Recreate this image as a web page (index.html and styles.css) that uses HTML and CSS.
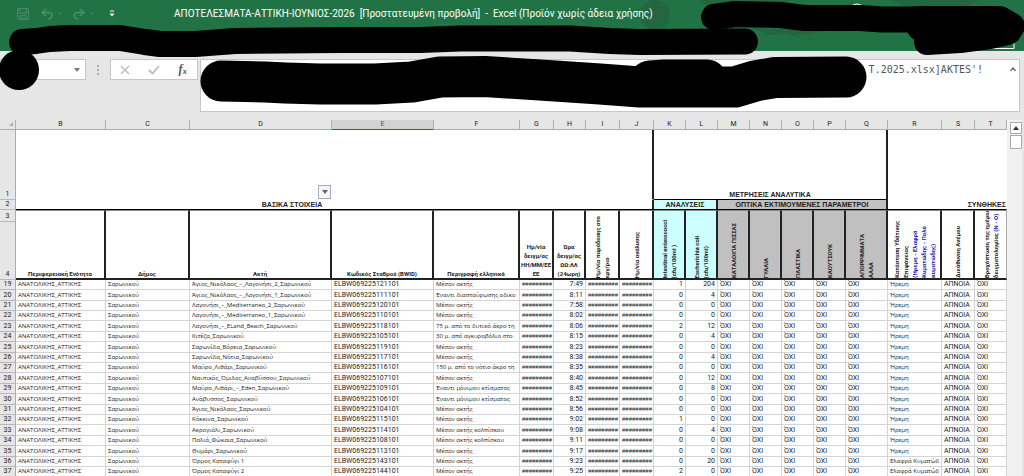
FILE: index.html
```html
<!DOCTYPE html>
<html lang="el">
<head>
  <meta charset="utf-8">
  <title>ΑΠΟΤΕΛΕΣΜΑΤΑ-ΑΤΤΙΚΗ-ΙΟΥΝΙΟΣ-2026</title>
  <link rel="stylesheet" href="styles.css">
</head>
<body>
<header class="titlebar">
<svg class="pattern" width="384" height="51" viewBox="0 0 384 51">
<circle cx="15" cy="15" r="15"/>
<path d="M60 0h90l-20 8H70zM110 28l50 2-1 8-12-4-16 1zM160 28h45l-25 4-20 3zM250 0h90l-20 8h-50z"/>
</svg>
<div class="quick">
<button class="quick-button" aria-label="Αποθήκευση"><svg width="12" height="12" viewBox="0 0 12 12"><path d="M.7.7h10.6v10.6H2.2L.7 9.8zM2.7.7v4.6h6.6V.7M3.2 11.3V7.7h5.6v3.6M5 9v2"/></svg></button>
<button class="quick-button undo" aria-label="Αναίρεση"><svg width="22" height="12" viewBox="0 0 22 12"><path d="M5 1 1 4.5 5 8M1.5 4.5H8c4.5 0 4 6-1 6.5" stroke-width="1.5"/><path d="m17 4.5 2 2 2-2"/></svg></button>
<button class="quick-button redo" aria-label="Επανάληψη"><svg width="22" height="12" viewBox="0 0 22 12"><path d="m7 1 4 3.5L7 8M10.5 4.5H4.5C-.5 4.5 0 10.5 5 11" stroke-width="1.5"/><path d="m17 4.5 2 2 2-2"/></svg></button>
<button class="quick-button more" aria-label="Προσαρμογή"><svg width="6" height="8" viewBox="0 0 6 8"><path d="M1 1h4"/><path class="solid" d="M.5 3.5h5L3 6.5z"/></svg></button>
</div>
<h1 class="title">ΑΠΟΤΕΛΕΣΜΑΤΑ-ΑΤΤΙΚΗ-ΙΟΥΝΙΟΣ-2026&nbsp; [Προστατευμένη προβολή]&nbsp; -&nbsp; Excel (Προϊόν χωρίς άδεια χρήσης)</h1>
</header>

<div class="formula-bar">
<div class="name-box"><input class="name-input" type="text" aria-label="Πλαίσιο ονόματος"><svg width="6" height="4" viewBox="0 0 6 4"><path d="M0 0h6L3 4z" fill="#777"/></svg></div>
<svg class="dots" width="2" height="10" viewBox="0 0 2 10"><path d="M0 0h2v2H0zM0 4h2v2H0zM0 8h2v2H0z" fill="#aaa"/></svg>
<div class="formula-buttons">
<button class="formula-button" aria-label="Άκυρο"><svg width="10" height="10" viewBox="0 0 10 10"><path d="m1 1 8 8M9 1 1 9" stroke="#bbb" stroke-width="1.4"/></svg></button>
<button class="formula-button" aria-label="Εισαγωγή"><svg width="12" height="10" viewBox="0 0 12 10"><path d="m1 5 3.5 3.5L11 1" fill="none" stroke="#bbb" stroke-width="1.8"/></svg></button>
<button class="formula-button fx" aria-label="Εισαγωγή συνάρτησης">f<small>x</small></button>
</div>
<div class="formula">
<output class="formula-text">T.2025.xlsx]AKTES'!</output>
<button class="collapse" aria-label="Σύμπτυξη"><svg width="6" height="5" viewBox="0 0 6 5"><path d="m.5 4 2.5-3 2.5 3" fill="none" stroke="#666" stroke-width="1.4"/></svg></button>
</div>
</div>

<main class="workspace">
<table class="sheet">
<colgroup>
<col class="c-num"><col class="c-b"><col class="c-c"><col class="c-d"><col class="c-e"><col class="c-f"><col class="c-g"><col class="c-h"><col class="c-i"><col class="c-i"><col class="c-k"><col class="c-k"><col class="c-k"><col class="c-k"><col class="c-k"><col class="c-k"><col class="c-q"><col class="c-r"><col class="c-s"><col>
</colgroup>
<thead>
<tr class="letters">
<th class="corner"><svg width="4" height="4" viewBox="0 0 4 4"><path d="M4 0v4H0z" fill="#aaa"/></svg></th><th>B</th><th>C</th><th>D</th><th class="active">E</th><th>F</th><th>G</th><th>H</th><th>I</th><th>J</th><th>K</th><th>L</th><th>M</th><th>N</th><th>O</th><th>P</th><th>Q</th><th>R</th><th>S</th><th>T</th>
</tr>
<tr class="row-1">
<th class="num">1</th>
<td class="filter-cell" colspan="3"><button class="filter" aria-label="Φίλτρο"><svg width="6" height="4" viewBox="0 0 6 4"><path d="M0 0h6L3 4z" fill="#666"/></svg></button></td>
<td class="thick-right" colspan="6"></td>
<td class="thick-right thick-bottom group" colspan="7">ΜΕΤΡΗΣΕΙΣ ΑΝΑΛΥΤΙΚΑ</td>
<td colspan="3"></td>
</tr>
<tr class="row-2">
<th class="num">2</th>
<td class="group basic thick-right" colspan="9">ΒΑΣΙΚΑ ΣΤΟΙΧΕΙΑ</td>
<td class="group cyan thick-right" colspan="2">ΑΝΑΛΥΣΕΙΣ</td>
<td class="group grey thick-right" colspan="5">ΟΠΤΙΚΑ ΕΚΤΙΜΟΥΜΕΝΕΣ ΠΑΡΑΜΕΤΡΟΙ</td>
<td class="group conditions" colspan="3">ΣΥΝΘΗΚΕΣ</td>
</tr>
<tr class="row-3">
<th class="num">3</th>
<th class="field" rowspan="2">Περιφερειακή Ενότητα</th>
<th class="field" rowspan="2">Δήμος</th>
<th class="field" rowspan="2">Ακτή</th>
<th class="field" rowspan="2">Κωδικός Σταθμού (BWID)</th>
<th class="field" rowspan="2">Περιγραφή ελληνικά</th>
<th class="field" rowspan="2">Ημ/νία<br>δειγμ/ας<br>ΗΗ/ΜΜ/ΕΕ<br>ΕΕ</th>
<th class="field" rowspan="2">Ώρα<br>δειγμ/ας<br>ΩΩ:ΛΛ<br>(24ωρη)</th>
<th class="field" rowspan="2"><span class="turned">Ημ/νία παράδοσης στο<br>εργ/ριο</span></th>
<th class="field" rowspan="2"><span class="turned">Ημ/νία ανάλυσης</span></th>
<th class="field cyan" rowspan="2"><span class="turned">Intestinal enterococci<br>(cfu/100ml )</span></th>
<th class="field cyan" rowspan="2"><span class="turned">Escherichia coli<br>(cfu/100ml)</span></th>
<th class="field grey" rowspan="2"><span class="turned">ΚΑΤΑΛΟΙΠΑ ΠΙΣΣΑΣ</span></th>
<th class="field grey" rowspan="2"><span class="turned">ΓΥΑΛΙΑ</span></th>
<th class="field grey" rowspan="2"><span class="turned">ΠΛΑΣΤΙΚΑ</span></th>
<th class="field grey" rowspan="2"><span class="turned">ΚΑΟΥΤΣΟΥΚ</span></th>
<th class="field grey" rowspan="2"><span class="turned">ΑΠΟΡΡΙΜΜΑΤΑ<br>ΑΛΛΑ</span></th>
<th class="field" rowspan="2"><span class="turned">Κατάσταση Υδάτινης<br>Επιφάνειας<br><span class="blue">(Ήρεμη - Ελαφρά<br>Κυματώδης - Πολύ<br>κυματώδης)</span></span></th>
<th class="field" rowspan="2"><span class="turned">Διεύθυνση Ανέμου</span></th>
<th class="field last" rowspan="2"><span class="turned">Βροχόπτωση της ημέρας<br>δειγματοληψίας <span class="blue">(Ν - Ο)</span></span></th>
</tr>
<tr class="row-4"><th class="num">4</th></tr>
</thead>
<tbody id="rows"></tbody>
</table>
<div class="scrollbar">
<button class="scroll-up" aria-label="Κύλιση επάνω"><svg width="6" height="4" viewBox="0 0 6 4"><path d="M0 4h6L3 0z" fill="#333"/></svg></button>
<div class="thumb"></div>
</div>
</main>

<svg class="marker" width="1024" height="120" viewBox="0 0 1024 120">
<path class="share" d="M990 48.5h24v-6"/>
<path class="share" d="M853 5q4-2 8 0"/>
<path class="thin" d="M22 42 36 41 50 39 70 38 120 38 145 42 160 44 195 44 235 41 340 40 420 40 460 38.5 570 38.5 610 41 640 42 745 41.5"/>
<path class="thin" d="M714 17 736 14 780 15 796 17 806 18 860 18 882 19.5 912 19.5 922 19 1000 19 1012 26 1008 32 990 36 960 40 927 42M920 28 940 30 1000 28"/>
<circle cx="19" cy="70" r="20"/>
<path class="wide" d="M221 81 265 82 285 83 320 84 375 84 412 82 440 77 485 76.5 540 80 600 84 640 87 735 87 755 81 775 77.5 846 77M650 81 665 80 707 80"/>
</svg>

<script>
var level = "Μέσον ακτής";
var opposite = "Έναντι μόνιμου κτίσματος";

// code suffix, beach, station description, time, enterococci, e. coli
var samples = [
  ["121101", "Άγιος_Νικόλαος_–_Λαγονήσι_2_Σαρωνικού", level, "7:49", 1, 204],
  ["111101", "Άγιος_Νικόλαος_–_Λαγονήσι_1_Σαρωνικού", "Έναντι διασταύρωσης οδικο", "8:11", 0, 4],
  ["120101", "Λαγονήσι_–_Mediterraneo_2_Σαρωνικού", level, "7:58", 0, 0],
  ["110101", "Λαγονήσι_–_Mediterraneo_1_Σαρωνικού", level, "8:02", 0, 0],
  ["118101", "Λαγονήσι_–_ELand_Beach_Σαρωνικού", "75 μ. από το δυτικό άκρο τη", "8:06", 2, 12],
  ["105101", "Κιτέζα_Σαρωνικού", "30 μ. από αγκυροβόλιο στο", "8:15", 0, 4],
  ["119101", "Σαρωνίδα_Βόρεια_Σαρωνικού", level, "8:23", 0, 0],
  ["117101", "Σαρωνίδα_Νότια_Σαρωνικού", level, "8:38", 0, 4],
  ["116101", "Μαύρο_Λιθάρι_Σαρωνικού", "150 μ. από το νότιο άκρο τη", "8:35", 0, 0],
  ["107101", "Ναυτικός_Όμιλος_Αναβύσσου_Σαρωνικού", level, "8:40", 0, 12],
  ["109101", "Μαύρο_Λιθάρι_–_Eden_Σαρωνικού", opposite, "8:45", 0, 8],
  ["106101", "Ανάβυσσος_Σαρωνικού", opposite, "8:52", 0, 0],
  ["104101", "Άγιος_Νικόλαος_Σαρωνικού", level, "8:56", 0, 0],
  ["115101", "Κόκκινα_Σαρωνικού", level, "9:02", 1, 0],
  ["114101", "Ακρογιάλι_Σαρωνικού", "Μέσον ακτής κολπίσκου", "9:08", 0, 4],
  ["108101", "Παλιά_Φώκαια_Σαρωνικού", "Μέσον ακτής κολπίσκου", "9:11", 0, 0],
  ["113101", "Θυμάρι_Σαρωνικού", level, "9:17", 0, 0],
  ["143101", "Όρμος Καταφύγι 1", level, "9:23", 0, 20],
  ["144101", "Όρμος Καταφύγι 2", level, "9:25", 2, 0]
];

var body = document.getElementById("rows");

function addCell(row, text, className) {
  var cell = row.insertCell();
  cell.textContent = text;
  if (className) cell.className = className;
}

for (var i = 0; i < samples.length; i++) {
  var s = samples[i];
  var row = body.insertRow();
  var num = document.createElement("th");
  num.className = "num";
  num.textContent = 19 + i;
  row.appendChild(num);
  addCell(row, "ΑΝΑΤΟΛΙΚΗΣ_ΑΤΤΙΚΗΣ", "text");
  addCell(row, "Σαρωνικού", "text");
  addCell(row, s[1], "text");
  addCell(row, "ELBW069225" + s[0]);
  addCell(row, s[2], "text");
  addCell(row, "#########", "hash");
  addCell(row, s[3], "right");
  addCell(row, "#########", "hash");
  addCell(row, "#########", "hash");
  addCell(row, s[4], "right");
  addCell(row, s[5], "right");
  for (var j = 0; j < 5; j++) addCell(row, "ΌΧΙ");
  addCell(row, i < 17 ? "Ήρεμη" : "Ελαφρά Κυματώδ", "text");
  addCell(row, "ΑΠΝΟΙΑ");
  addCell(row, "ΌΧΙ");
}
</script>
</body>
</html>
```
FILE: styles.css
```css
* {
  box-sizing: border-box;
}

body {
  margin: 0;
  height: 100vh;
  overflow: hidden;
  display: flex;
  flex-direction: column;
  background: #e6e6e6;
  font-family: Roboto, "Open Sans", sans-serif;
  font-size: 7px;
  color: #222;
}

button {
  display: flex;
  align-items: center;
  justify-content: center;
  padding: 0;
  border: 0;
  background: none;
  font-family: inherit;
}

.titlebar {
  position: relative;
  flex: none;
  display: flex;
  align-items: flex-start;
  height: 51px;
  padding-left: 17px;
  background: #217346;
  color: #fff;
}

.quick {
  flex: none;
  display: flex;
  align-items: center;
  gap: 10px;
  width: 157px;
  height: 28px;
}

.quick-button svg {
  fill: none;
  stroke: #4d8f6b;
}

.undo {
  margin-left: 2px;
}

.more {
  margin-left: 4px;
}

.quick .more svg {
  stroke: #fff;
}

.solid {
  fill: #fff;
  stroke: none;
}

.title {
  position: relative;
  margin: 0;
  font-size: 10px;
  line-height: 28px;
  font-weight: normal;
  white-space: nowrap;
}

.pattern {
  position: absolute;
  top: 0;
  right: 0;
  fill: #246640;
}

.formula-bar {
  flex: none;
  display: flex;
  align-items: flex-start;
  height: 69px;
  padding: 8px 4px 8px 0;
}

.name-box {
  display: flex;
  align-items: center;
  width: 86px;
  height: 21px;
  padding-right: 5px;
  border: 1px solid #c6c6c6;
  background: #fff;
}

.name-input {
  flex: 1;
  min-width: 0;
  border: 0;
  outline: 0;
}

.dots {
  margin: 6px 11px 0;
}

.formula-buttons {
  display: flex;
  width: 88px;
  height: 21px;
  margin-right: 2px;
  border: 1px solid #c6c6c6;
  background: #fff;
}

.formula-button {
  flex: 1;
}

.fx {
  font-family: "Liberation Serif", serif;
  font-size: 12px;
  font-style: italic;
  font-weight: bold;
  color: #555;
}

.fx small {
  font-size: 9px;
  padding-top: 3px;
}

.formula {
  flex: 1;
  display: flex;
  align-items: flex-start;
  justify-content: flex-end;
  height: 53px;
  padding: 2px 3px;
  border: 1px solid #c6c6c6;
  background: #fff;
}

.formula-text {
  font-family: "DejaVu Sans Mono", monospace;
  font-size: 10px;
  line-height: 16px;
  color: #555;
}

.collapse {
  width: 6px;
  height: 14px;
  margin-left: 27px;
}

.workspace {
  flex: 1;
  min-height: 0;
  display: flex;
  align-items: flex-start;
}

.sheet {
  flex: 1;
  width: 100%;
  table-layout: fixed;
  border-collapse: separate;
  border-spacing: 0;
  background: #fff;
  line-height: 9px;
}

.c-num { width: 16px; }
.c-b { width: 90px; }
.c-c { width: 84px; }
.c-d { width: 142px; }
.c-e { width: 102px; }
.c-f { width: 86px; }
.c-g { width: 34px; }
.c-h { width: 32px; }
.c-i { width: 34px; }
.c-k { width: 32px; }
.c-q { width: 42px; }
.c-r { width: 54px; }
.c-s { width: 33px; }

th,
td {
  height: 10px;
  padding: 0 2px;
  border-right: 1px solid #d4d4d4;
  border-bottom: 1px solid #d4d4d4;
  overflow: hidden;
  white-space: nowrap;
  text-align: left;
}

tbody tr:nth-child(5n + 2) td,
tbody tr:nth-child(5n + 5) td {
  height: 11px;
}

.letters th {
  padding: 0;
  border-right-color: #b0b0b0;
  border-bottom-color: #ababab;
  background: #e6e6e6;
  font-weight: normal;
  text-align: center;
}

.letters .corner {
  text-align: right;
  padding-right: 2px;
}

.letters .active {
  border-bottom-color: #217346;
  background: #d2d2d2;
  color: #217346;
}

.num {
  padding: 0;
  border-right-color: #ababab;
  border-bottom-color: #b8b8b8;
  background: #e6e6e6;
  font-weight: normal;
  text-align: center;
  vertical-align: bottom;
}

.row-1 td,
.row-2 td {
  border-color: #fff;
  vertical-align: bottom;
}

.row-1 td {
  height: 70px;
}

.row-1 .filter-cell {
  padding: 0;
}

.filter {
  width: 13px;
  height: 14px;
  margin-left: auto;
  border: 1px solid #a5acb8;
  background: #f4f6fa;
}

.row-1 .thick-right,
.row-2 .thick-right {
  border-right: 2px solid #222;
}

.row-1 .thick-bottom,
.row-2 .group {
  border-bottom: 1px solid #000;
}

.group {
  font-family: "Liberation Sans", sans-serif;
  font-size: 7px;
  font-weight: bold;
  text-align: center;
}

.basic {
  padding-right: 86px;
}

.conditions {
  padding: 0;
  text-align: right;
}

.cyan {
  background: #ccffff;
}

.grey {
  background: #c0c0c0;
}

.row-3 th {
  height: 12px;
}

.row-4 th {
  height: 58px;
}

.field {
  padding: 0;
  border-top: 1px solid #888;
  border-right: 2px solid #222;
  border-bottom: 2px solid #222;
  font-size: 6px;
  vertical-align: bottom;
  text-align: center;
}

.last {
  border-right: 1px solid #ababab;
}

.turned {
  display: inline-block;
  max-height: 66px;
  writing-mode: vertical-rl;
  transform: rotate(180deg);
  vertical-align: bottom;
  text-align: left;
}

.blue {
  color: #2222aa;
}

.text {
  font-family: "Open Sans", "Noto Sans", sans-serif;
  font-size: 6px;
}

.right {
  text-align: right;
}

.hash {
  font-family: "Liberation Sans", sans-serif;
  font-size: 6px;
  text-align: right;
}

.scrollbar {
  flex: none;
  align-self: stretch;
  width: 17px;
  padding: 2px 2px 0 3px;
  border-right: 2px solid #e6e6e6;
  background: #f1f1f1;
}

.scroll-up,
.thumb {
  width: 12px;
  height: 12px;
  border: 1px solid #ababab;
  background: #fff;
}

.thumb {
  height: 14px;
  margin-top: 1px;
}

/* black marker strokes over the toolbar */
.marker {
  position: absolute;
  top: 0;
  left: 0;
  pointer-events: none;
}

.thin,
.wide {
  fill: none;
  stroke: #000;
  stroke-width: 26px;
  stroke-linecap: round;
  stroke-linejoin: round;
}

.wide {
  stroke-width: 41px;
}

.share {
  fill: none;
  stroke: #fff;
}
```
